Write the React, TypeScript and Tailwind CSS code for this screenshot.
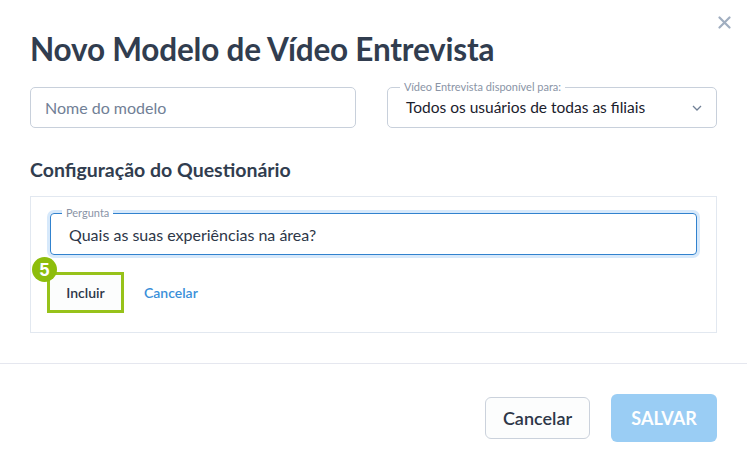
import React from "react";

export default function App() {
  const font = { fontFamily: "Lato, 'Noto Sans', sans-serif" };
  return (
    <div className="w-[747px] h-[472px] bg-white relative overflow-hidden" style={font}>
      <button className="absolute right-[16px] top-[16px] text-[#a0aec0]">
        <svg width="13" height="13" viewBox="0 0 13 13">
          <path d="M1.5 1.5 L11.5 11.5 M11.5 1.5 L1.5 11.5" stroke="#a0aec0" strokeWidth="2.2" strokeLinecap="round" />
        </svg>
      </button>
      <div className="px-[30px] pt-[30px]">
        <h1 className="text-[31.5px] leading-[38px] font-bold text-[#313d4f] tracking-[-0.2px]">
          Novo Modelo de Vídeo Entrevista
        </h1>
        <div className="flex gap-[31px] mt-[19px]">
          <div className="flex-1 h-[41px] border border-[#c8d0db] rounded-[5px] flex items-center px-[14px]">
            <span className="text-[16px] text-[#718096]">Nome do modelo</span>
          </div>
          <div className="flex-1 h-[41px] border border-[#c8d0db] rounded-[5px] flex items-center pl-[18px] pr-[14px] relative">
            <span className="absolute left-[12px] top-[-8px] bg-white px-[4px] text-[11px] leading-[14px] text-[#8a94a6]">
              Vídeo Entrevista disponível para:
            </span>
            <span className="flex-1 text-[15.5px] text-[#1a202c]">Todos os usuários de todas as filiais</span>
            <svg width="10" height="6" viewBox="0 0 10 6">
              <path d="M1 1 L5 5 L9 1" stroke="#718096" strokeWidth="1.3" fill="none" />
            </svg>
          </div>
        </div>
        <h2 className="mt-[30px] text-[19.5px] leading-[24px] font-bold text-[#313d4f]">
          Configuração do Questionário
        </h2>
        <div className="mt-[14px] border border-[#e2e8f0] h-[137px] px-[19px] pt-[16px]">
          <div className="h-[42px] border border-[#3182ce] rounded-[4px] shadow-[0_0_0_3px_#d7e9fb] relative flex items-center pl-[18px]">
            <span className="absolute left-[11px] top-[-8px] bg-white px-[4px] text-[11px] leading-[14px] text-[#8a94a6]">
              Pergunta
            </span>
            <span className="text-[16px] text-[#2d3748] mt-[2px]">Quais as suas experiências na área?</span>
          </div>
          <div className="flex items-center mt-[17px] gap-[20px]">
            <div className="relative ml-[-3px]">
              <div className="w-[77px] h-[41px] border-[3px] border-[#97c21a] bg-[#fcfdfd] flex items-center justify-center text-[14px] font-semibold text-[#2d3748]">
                Incluir
              </div>
              <div className="absolute left-[-15px] top-[-15px] w-[25px] h-[25px] rounded-full bg-[#8dbd0c] flex items-center justify-center text-white font-bold text-[18px] leading-none" style={{ fontFamily: "'Liberation Sans', Arial, sans-serif" }}>
                5
              </div>
            </div>
            <span className="text-[14px] font-semibold text-[#3a8fd9]">Cancelar</span>
          </div>
        </div>
      </div>
      <div className="mt-[30px] border-t border-[#e5e7ef]" />
      <div className="flex justify-end items-center gap-[21px] pr-[30px] pt-[30px]">
        <button className="w-[105px] h-[42px] border border-[#cbd2dc] rounded-[6px] bg-[#fcfdfd] text-[18px] font-semibold text-[#2d3748]" style={font}>
          Cancelar
        </button>
        <button className="w-[106px] h-[48px] rounded-[6px] bg-[#9acdf4] text-[18px] font-bold text-white" style={font}>
          SALVAR
        </button>
      </div>
    </div>
  );
}
